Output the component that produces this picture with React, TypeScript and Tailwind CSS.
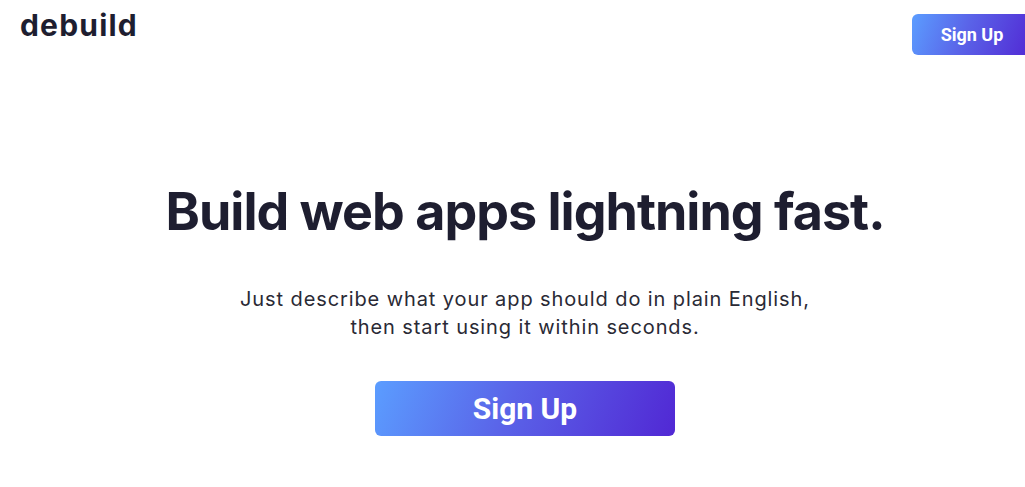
const gradient = "bg-[linear-gradient(110deg,#5b9dff_0%,#5a63e8_45%,#5128d4_100%)]";

const App = () => {
  return (
    <div className="w-full h-[487px] overflow-hidden bg-white font-['Inter',sans-serif]">
      <div className="w-[1050px] relative">
        <header className="flex justify-between items-start pl-5 pr-0">
          <span className="text-[30px] font-bold text-[#1e1e30] tracking-[0.04em] leading-none pt-[10px]">
            debuild
          </span>
          <button
            className={`${gradient} mt-[14px] mr-[18px] w-[120px] h-[41px] rounded-md text-white font-bold text-[18px] font-['Roboto',sans-serif]`}
          >
            Sign Up
          </button>
        </header>

        <main className="flex flex-col items-center pt-[131px]">
          <h1 className="text-[52px] font-bold text-[#1e1e30] tracking-[-0.019em] leading-none">
            Build web apps lightning fast.
          </h1>
          <p className="mt-[47px] text-[20px] leading-[28px] text-[#2a2a35] text-center tracking-[0.045em]">
            Just describe what your app should do in plain English,
            <br />
            then start using it within seconds.
          </p>
          <button
            className={`${gradient} mt-[40px] w-[300px] h-[55px] rounded-md text-white font-bold text-[30px] font-['Roboto',sans-serif]`}
          >
            Sign Up
          </button>
        </main>
      </div>
    </div>
  );
};

export default App;
